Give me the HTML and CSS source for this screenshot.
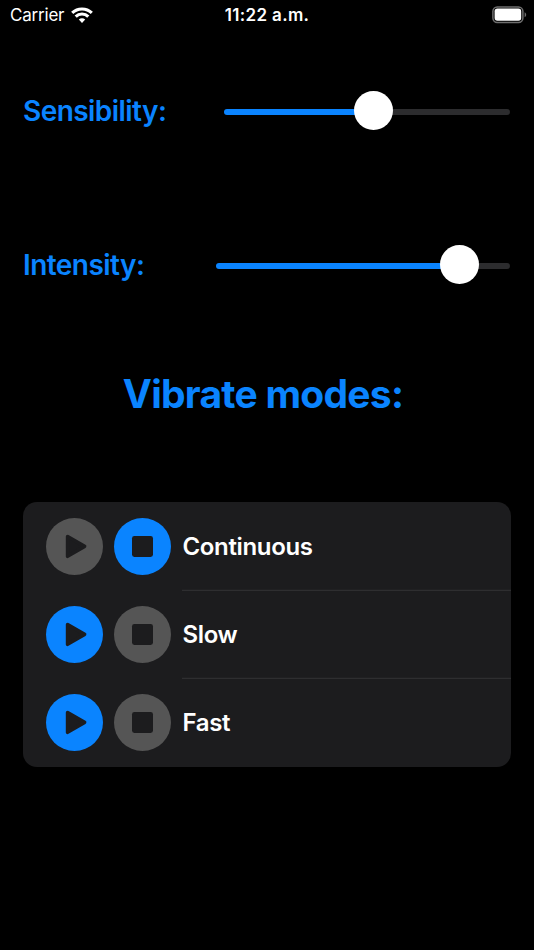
FILE: index.html
```html
<!DOCTYPE html>
<html lang="en">
<head>
<meta charset="utf-8">
<title>Vibrate</title>
<link rel="stylesheet" href="styles.css">
</head>
<body>
<svg class="defs" width="0" height="0">
  <symbol id="play" viewBox="0 0 57 57"><path d="M21.6 18.5 L38.6 28.4 L21.6 38.3 Z" stroke="currentColor" stroke-width="3.6" stroke-linejoin="round" fill="currentColor"/></symbol>
  <symbol id="stop" viewBox="0 0 57 57"><rect x="18" y="18" width="21" height="21" rx="2.4" fill="currentColor"/></symbol>
</svg>
<header class="status">
  <div class="carrier"><span>Carrier</span>
    <svg class="wifi" width="22" height="16" viewBox="0 0 22 16"><g fill="none" stroke="#fff" stroke-width="3.1"><path d="M1.2 5.9 C6.6 .6 15.4 .6 20.8 5.9"/><path d="M4.7 9.6 C8.2 6.1 13.8 6.1 17.3 9.6"/></g><path d="M11 15.9 L7.8 12.6 C9.6 10.9 12.4 10.9 14.2 12.6 Z" fill="#fff"/></svg>
  </div>
  <time class="time">11:22 a.m.</time>
  <svg class="battery" width="35" height="18" viewBox="0 0 35 18"><rect x=".9" y=".9" width="30" height="15.6" rx="4.4" fill="none" stroke="#6e6e6e" stroke-width="1.5"/><rect x="2.6" y="2.6" width="26.6" height="12.2" rx="2.8" fill="#fff"/><path d="M32.6 6.2 C34.7 7 34.7 10.4 32.6 11.2 Z" fill="#6e6e6e"/></svg>
</header>
<main>
  <section class="setting">
    <span class="label">Sensibility:</span>
    <div class="slider wide"><div class="fill"></div><div class="thumb"></div><div class="rest"></div></div>
  </section>
  <section class="setting second">
    <span class="label">Intensity:</span>
    <div class="slider wider"><div class="fill"></div><div class="thumb"></div><div class="rest"></div></div>
  </section>
  <h1>Vibrate modes:</h1>
  <ul class="modes">
    <li><svg class="button"><use href="#play"/></svg><svg class="button on"><use href="#stop"/></svg><div class="name">Continuous</div></li>
    <li><svg class="button on"><use href="#play"/></svg><svg class="button"><use href="#stop"/></svg><div class="name">Slow</div></li>
    <li><svg class="button on"><use href="#play"/></svg><svg class="button"><use href="#stop"/></svg><div class="name">Fast</div></li>
  </ul>
</main>
</body>
</html>
```
FILE: styles.css
```css
* { box-sizing: border-box; }
body {
  margin: 0;
  height: 950px;
  overflow: hidden;
  background: #000;
  color: #fff;
  font-family: Inter, "Liberation Sans", sans-serif;
}
.defs { display: block; }
.status {
  display: grid;
  grid-template-columns: 1fr auto 1fr;
  align-items: center;
  height: 30px;
  padding: 0 7px 0 10px;
  font-size: 17px;
}
.carrier { display: flex; align-items: center; gap: 7px; letter-spacing: -0.2px; }
.wifi { margin-top: -1px; }
.time { font-weight: 600; letter-spacing: 0.35px; margin-left: -3px; }
.battery { justify-self: end; margin-top: -1px; }
.setting {
  display: flex;
  justify-content: space-between;
  align-items: center;
  height: 40px;
  margin: 61px 24px 0 23px;
}
.second { margin-top: 114px; }
.label {
  color: #0a84ff;
  font-size: 28px;
  font-weight: 600;
  line-height: 41px;
  letter-spacing: -0.55px;
}
.slider { display: flex; align-items: center; height: 40px; }
.wide { width: 286px; }
.wider { width: 294px; }
.fill { height: 6px; margin-top: 2px; background: #0a84ff; border-radius: 3px 0 0 3px; }
.wide .fill { width: 131px; }
.wider .fill { width: 225.2px; }
.thumb {
  flex: none;
  width: 39px;
  height: 39px;
  margin: -1px -1px 0;
  border-radius: 50%;
  background: #fff;
  z-index: 1;
}
.rest { flex: 1; height: 6px; margin-top: 2px; background: #2c2c2e; border-radius: 0 3px 3px 0; }
h1 {
  margin: 84px 0 0;
  padding-right: 8px;
  height: 50px;
  line-height: 50px;
  text-align: center;
  color: #0a84ff;
  font-size: 39px;
  font-weight: 700;
  letter-spacing: -0.75px;
}
.modes {
  list-style: none;
  margin: 83px 23px 0;
  padding: 0;
  height: 264.6px;
  border-radius: 14px;
  background: #1c1c1e;
  overflow: hidden;
}
.modes li {
  display: flex;
  align-items: center;
  gap: 11.4px;
  height: 88.2px;
  padding-left: 22.7px;
}
.button {
  flex: none;
  width: 57px;
  height: 57px;
  border-radius: 50%;
  background: #555;
  color: #1c1c1e;
}
.button.on { background: #0a84ff; }
.name {
  flex: 1;
  display: flex;
  align-items: center;
  height: 100%;
  padding-bottom: 1px;
  transform: translateY(0.8px);
  border-bottom: 1px solid #343436;
  font-size: 24px;
  font-weight: 580;
  letter-spacing: -0.35px;
}
li:last-child .name { border-bottom-color: transparent; }
```
